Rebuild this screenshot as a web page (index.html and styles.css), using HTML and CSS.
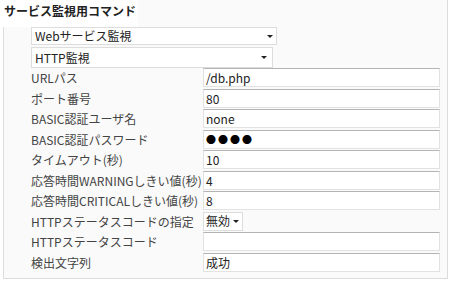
FILE: index.html
```html
<!DOCTYPE html>
<html lang="ja">
<head>
<meta charset="utf-8">
<link rel="stylesheet" href="styles.css">
</head>
<body>
<div class="panel">
  <div class="title">サービス監視用コマンド</div>
  <div class="body">
    <div class="sel sel-a"><span>Webサービス監視</span><i class="caret"></i></div>
    <div class="sel sel-b"><span>HTTP監視</span><i class="caret"></i></div>
    <div class="form">
      <div class="lbl">URLパス</div><div class="inp">/db.php</div>
      <div class="lbl">ポート番号</div><div class="inp">80</div>
      <div class="lbl">BASIC認証ユーザ名</div><div class="inp">none</div>
      <div class="lbl">BASIC認証パスワード</div><div class="inp pw">●●●●</div>
      <div class="lbl">タイムアウト(秒)</div><div class="inp">10</div>
      <div class="lbl">応答時間WARNINGしきい値(秒)</div><div class="inp">4</div>
      <div class="lbl">応答時間CRITICALしきい値(秒)</div><div class="inp">8</div>
      <div class="lbl">HTTPステータスコードの指定</div><div class="cell"><div class="sel sel-c"><span>無効</span><i class="caret"></i></div></div>
      <div class="lbl">HTTPステータスコード</div><div class="inp"></div>
      <div class="lbl">検出文字列</div><div class="inp">成功</div>
    </div>
  </div>
</div>
</body>
</html>
```
FILE: styles.css
```css
html, body {
  margin: 0;
  padding: 0;
  background: #fff;
}
body {
  font-family: "Noto Sans CJK JP", "Noto Sans", sans-serif;
  font-size: 12px;
  color: #333;
  width: 451px;
  height: 283px;
  overflow: hidden;
}
.panel {
  margin-left: 3px;
  width: 445px;
  height: 279px;
  box-sizing: border-box;
  border: 1px solid #dcdcdc;
  border-top: none;
  background: #fafafa;
}
.title {
  margin-left: -2px;
  padding: 2px 2px 0 2px;
  height: 25px;
  width: fit-content;
  background: #fff;
  font-weight: bold;
  font-size: 12px;
  line-height: 18px;
  color: #222;
}
.body {
  padding-left: 27px;
}
.sel {
  display: flex;
  align-items: center;
  justify-content: space-between;
  box-sizing: border-box;
  border: 1px solid #dddddd;
  background: #fff;
  color: #222;
  padding: 0 3px 0 3px;
  line-height: 16px;
  white-space: nowrap;
}
.sel-a {
  width: 246px;
  height: 18px;
}
.sel-b {
  width: 242px;
  height: 21px;
  margin-top: 2px;
  padding-right: 5px;
}
.sel-c {
  height: 19px;
  padding: 0 3px 0 2px;
  gap: 3px;
  justify-content: flex-start;
}
.caret {
  flex: none;
  width: 0;
  height: 0;
  border-left: 3px solid transparent;
  border-right: 3px solid transparent;
  border-top: 3px solid #222;
}
.form {
  display: grid;
  grid-template-columns: 172px 237px;
  grid-auto-rows: 19px;
  row-gap: 1.5px;
}
.lbl {
  line-height: 19px;
  white-space: nowrap;
  color: #444;
}
.inp {
  box-sizing: border-box;
  height: 19px;
  border: 1px solid #e2e2e2;
  border-top-color: #b4b4b4;
  background: #fff;
  padding-left: 2px;
  line-height: 17px;
  color: #222;
}
.pw {
  font-size: 10px;
  letter-spacing: 2px;
  color: #000;
}
.cell {
  display: flex;
}
```
